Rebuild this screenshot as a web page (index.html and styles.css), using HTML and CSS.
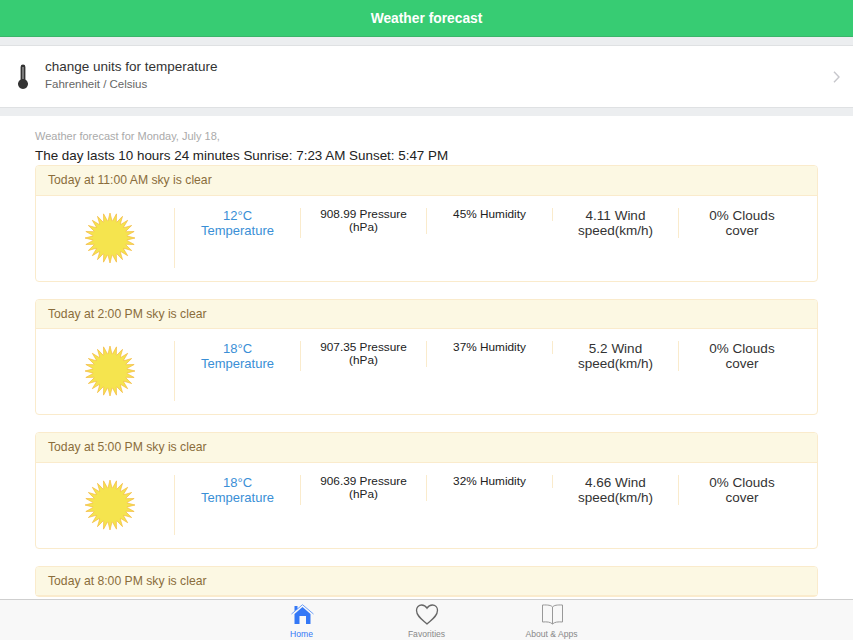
FILE: index.html
```html
<!DOCTYPE html>
<html lang="en">
<head>
    <meta charset="UTF-8">
    <meta name="viewport" content="width=device-width, initial-scale=1.0">
    <title>Weather forecast</title>
    <link rel="stylesheet" href="styles.css">
</head>
<body>
    <svg class="defs" width="0" height="0">
        <symbol id="sun" viewBox="-5 -5 60 60">
            <polygon fill="#f5e44e" stroke="#f3b93e" stroke-width="0.7" stroke-linejoin="round" points="25,0 27.15,8.64 31.47,.85 31.31,9.76 37.5,3.35 35.05,11.91 42.68,7.32 38.09,14.95 46.65,12.5 40.24,18.69 49.15,18.53 41.36,22.85 50,25 41.36,27.15 49.15,31.47 40.24,31.31 46.65,37.5 38.09,35.05 42.68,42.68 35.05,38.09 37.5,46.65 31.31,40.24 31.47,49.15 27.15,41.36 25,50 22.85,41.36 18.53,49.15 18.69,40.24 12.5,46.65 14.95,38.09 7.32,42.68 11.91,35.05 3.35,37.5 9.76,31.31 .85,31.47 8.64,27.15 0,25 8.64,22.85 .85,18.53 9.76,18.69 3.35,12.5 11.91,14.95 7.32,7.32 14.95,11.91 12.5,3.35 18.69,9.76 18.53,.85 22.85,8.64"/>
            <circle cx="25" cy="25" r="17" fill="#f5e44e"/>
        </symbol>
    </svg>

    <header class="navbar">Weather forecast</header>

    <div class="content">
        <div class="settings-row">
            <svg class="thermo" width="12" height="26" viewBox="0 0 12 26">
                <path fill="#333" d="M3.6 3a2.4 2.4 0 0 1 4.800 0v12.600a5 5 0 1 1-4.800 0z"/>
                <rect x="5.300" y="3" width="1.400" height="12" fill="#999"/>
            </svg>
            <div class="settings-text">
                <div class="settings-title">change units for temperature</div>
                <div class="settings-sub">Fahrenheit / Celsius</div>
            </div>
            <svg class="chevron" width="7" height="12" viewBox="0 0 7 12">
                <path d="M1 .7L6 6l-5 5.300" fill="none" stroke="#c7c7cc" stroke-width="1.400"/>
            </svg>
        </div>

        <main class="forecast">
            <p class="forecast-date">Weather forecast for Monday, July 18,</p>
            <p class="forecast-day">The day lasts 10 hours 24 minutes Sunrise: 7:23 AM Sunset: 5:47 PM</p>

            <div class="panel">
                <div class="panel-heading">Today at 11:00 AM sky is clear</div>
                <div class="panel-body">
                    <div class="col col-img"><svg width="60" height="60"><use href="#sun"/></svg></div>
                    <div class="col temp">12°C Temperature</div>
                    <div class="col small">908.99 Pressure (hPa)</div>
                    <div class="col small">45% Humidity</div>
                    <div class="col">4.11 Wind speed(km/h)</div>
                    <div class="col">0% Clouds cover</div>
                </div>
            </div>

            <div class="panel">
                <div class="panel-heading">Today at 2:00 PM sky is clear</div>
                <div class="panel-body">
                    <div class="col col-img"><svg width="60" height="60"><use href="#sun"/></svg></div>
                    <div class="col temp">18°C Temperature</div>
                    <div class="col small">907.35 Pressure (hPa)</div>
                    <div class="col small">37% Humidity</div>
                    <div class="col">5.2 Wind speed(km/h)</div>
                    <div class="col">0% Clouds cover</div>
                </div>
            </div>

            <div class="panel">
                <div class="panel-heading">Today at 5:00 PM sky is clear</div>
                <div class="panel-body">
                    <div class="col col-img"><svg width="60" height="60"><use href="#sun"/></svg></div>
                    <div class="col temp">18°C Temperature</div>
                    <div class="col small">906.39 Pressure (hPa)</div>
                    <div class="col small">32% Humidity</div>
                    <div class="col">4.66 Wind speed(km/h)</div>
                    <div class="col">0% Clouds cover</div>
                </div>
            </div>

            <div class="panel">
                <div class="panel-heading">Today at 8:00 PM sky is clear</div>
            </div>
        </main>
    </div>

    <nav class="tabbar">
        <a class="tab active">
            <svg width="24" height="21" viewBox="0 0 24 21">
                <path fill="none" stroke="#6ea0f8" stroke-width="1" d="M1.500 10L12.500 .7 23.500 10"/>
                <path fill="#3478f6" d="M4.500 7V2h3v3zM12.500 3l8 7v10H16v-8H9.500v8h-5V10z"/>
            </svg>
            <span>Home</span>
        </a>
        <a class="tab">
            <svg width="24" height="21" viewBox="0 0 24 21">
                <path fill="none" stroke="#666" stroke-width="1.300" d="M12 20C7 15.500 1.500 12 1.500 6.300 1.500 3.200 3.800 1 6.600 1c2.200 0 4.200 1.200 5.400 3.300C13.200 2.200 15.200 1 17.400 1c2.800 0 5.100 2.200 5.100 5.300C22.500 12 17 15.500 12 20z"/>
            </svg>
            <span>Favorities</span>
        </a>
        <a class="tab">
            <svg width="24" height="21" viewBox="0 0 24 21">
                <path fill="none" stroke="#999" stroke-width="1" d="M12.500 3C11 1.200 8 .8 2.500 1v17c4.500-.4 8 0 10 2 2-2 5.500-2.400 10-2V1c-5.500-.2-8.500.2-10 2zM12.500 3v17"/>
            </svg>
            <span>About &amp; Apps</span>
        </a>
    </nav>
</body>
</html>
```

FILE: styles.css
```css
html, body {
    height: 100%;
    margin: 0;
}
body {
    display: flex;
    flex-direction: column;
    overflow: hidden;
    font-family: "Liberation Sans", Arial, sans-serif;
    color: #222;
    background-color: #fff;
}
.defs {
    position: absolute;
}
.navbar {
    flex: none;
    height: 37px;
    line-height: 38px;
    text-align: center;
    color: #fff;
    font-size: 13.800px;
    font-weight: bold;
    background-color: #37cc73;
    box-sizing: border-box;
    border-bottom: 1px solid #3ab56a;
}
.content {
    flex: 1;
    min-height: 0;
    overflow: hidden;
}
.settings-row {
    display: flex;
    align-items: center;
    height: 63px;
    margin: 8px 0;
    background-color: #fff;
    box-shadow: 0 -8px 0 #eceef0, 0 8px 0 #eceef0;
    border-top: 1px solid #dfe1e3;
    border-bottom: 1px solid #dfe1e3;
    box-sizing: border-box;
}
.thermo {
    margin-left: 17px;
    flex: none;
}
.settings-text {
    flex: 1;
    margin-left: 16px;
    padding-bottom: 4px;
}
.settings-title {
    font-size: 13.500px;
    line-height: 17px;
    margin-bottom: 1px;
    color: #333;
}
.settings-sub {
    font-size: 11.500px;
    line-height: 16px;
    color: #666;
}
.chevron {
    margin-right: 13px;
}
.forecast {
    padding: 12px 35px 0;
}
.forecast-date {
    margin: 0;
    font-size: 11px;
    line-height: 17px;
    color: #aaa;
}
.forecast-day {
    margin: 2px 0 0;
    font-size: 13.400px;
    line-height: 18px;
    color: #222;
}
.panel {
    margin-bottom: 17px;
    width: 783px;
    background-color: #fff;
    border: 1px solid #faebcc;
    border-radius: 4px;
    box-sizing: border-box;
}
.panel-heading {
    height: 29.500px;
    line-height: 29px;
    padding-left: 12px;
    font-size: 12.200px;
    color: #8a6d3b;
    background-color: #fcf8e3;
    border-bottom: 1px solid #faebcc;
    box-sizing: border-box;
    border-radius: 3px 3px 0 0;
}
.panel-body {
    display: flex;
    align-items: flex-start;
    padding: 12px;
    padding-left: 0;
    height: 85px;
    box-sizing: border-box;
}
.col {
    width: 126px;
    box-sizing: border-box;
    padding: 0 15px;
    text-align: center;
    font-size: 13.500px;
    line-height: 15px;
    color: #333;
    border-right: 1px solid #faebcc;
}
.col:last-child {
    border-right: none;
}
.col-img {
    width: 139px;
    height: 60px;
    padding: 0 0 0 10px;
}
.temp {
    font-size: 13px;
    color: #3a8fd6;
}
.small {
    font-size: 11.800px;
    line-height: 13px;
    color: #222;
}
.tabbar {
    flex: none;
    display: flex;
    justify-content: center;
    height: 41px;
    box-sizing: border-box;
    background-color: #f8f8f8;
    border-top: 1px solid #cfcfcf;
}
.tab {
    width: 125px;
    display: flex;
    flex-direction: column;
    align-items: center;
    padding-top: 4px;
    font-size: 8.600px;
    color: #888;
}
.tab span {
    margin-top: 4px;
}
.tab.active {
    color: #3478f6;
}
```
